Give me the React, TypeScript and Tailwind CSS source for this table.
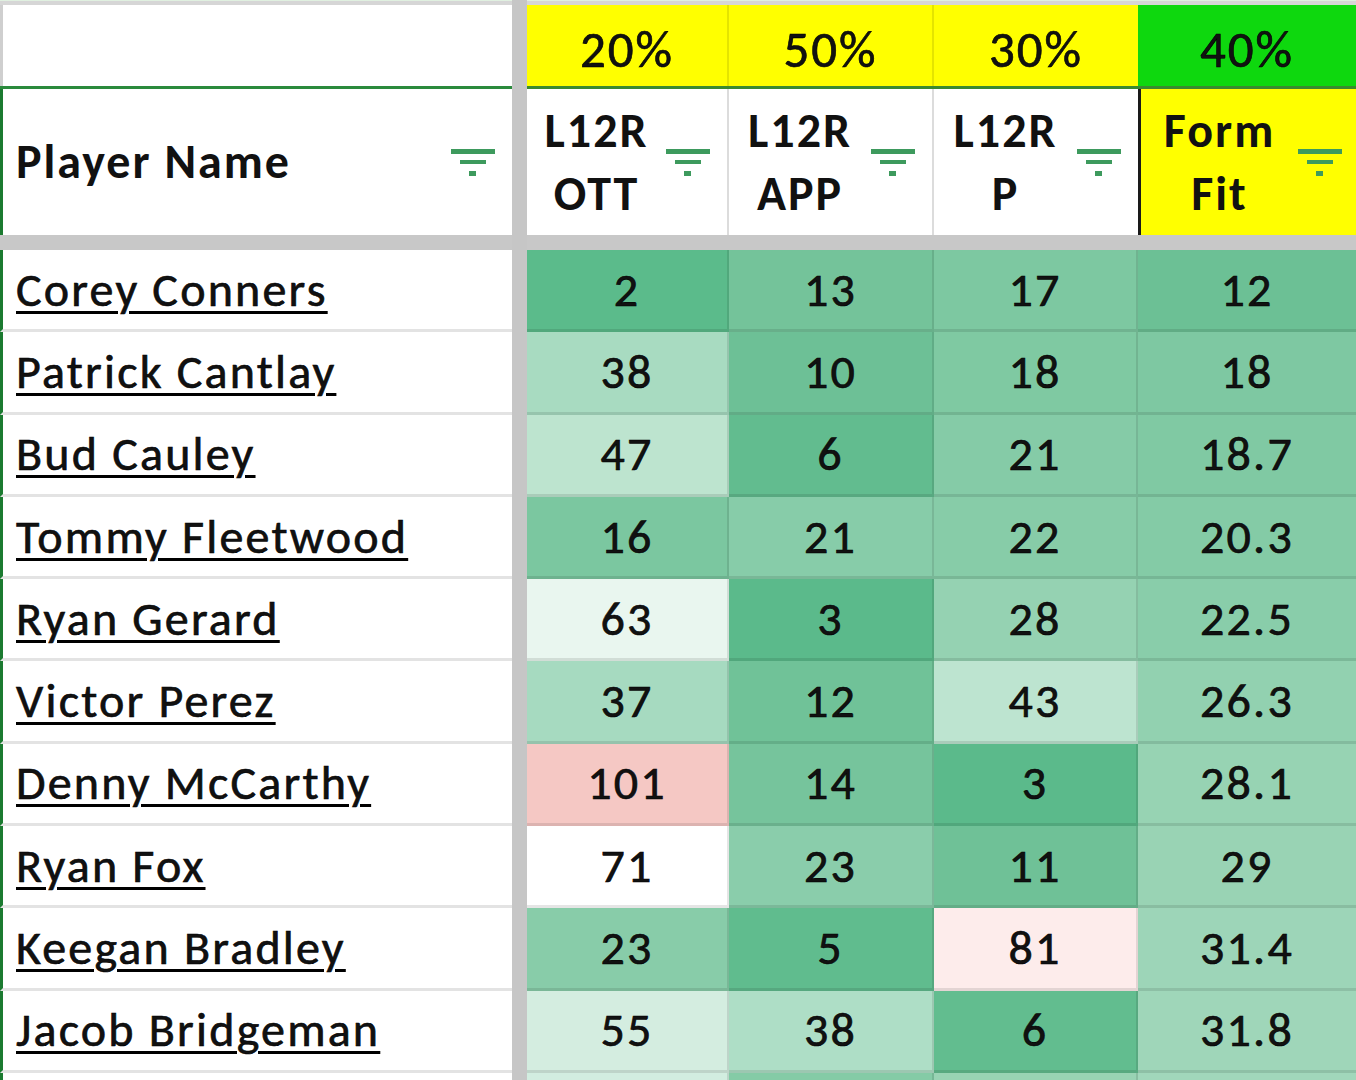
import React from "react";

type Row = { name: string; v: string[]; c: string[] };

const rows: Row[] = [
  { name: "Corey Conners", v: ["2", "13", "17", "12"], c: ["bg-[#5bbb8b]", "bg-[#74c39a]", "bg-[#7dc8a1]", "bg-[#6cc095]"] },
  { name: "Patrick Cantlay", v: ["38", "10", "18", "18"], c: ["bg-[#a8dbc1]", "bg-[#6dc096]", "bg-[#7fc9a2]", "bg-[#7ec8a2]"] },
  { name: "Bud Cauley", v: ["47", "6", "21", "18.7"], c: ["bg-[#bde4cf]", "bg-[#62bc8f]", "bg-[#85cba7]", "bg-[#80c9a3]"] },
  { name: "Tommy Fleetwood", v: ["16", "21", "22", "20.3"], c: ["bg-[#7bc7a0]", "bg-[#87cca9]", "bg-[#87cca8]", "bg-[#84cba6]"] },
  { name: "Ryan Gerard", v: ["63", "3", "28", "22.5"], c: ["bg-[#e9f6ef]", "bg-[#5bba8b]", "bg-[#95d2b2]", "bg-[#89cdaa]"] },
  { name: "Victor Perez", v: ["37", "12", "43", "26.3"], c: ["bg-[#a6dac0]", "bg-[#70c298]", "bg-[#bde4d0]", "bg-[#92d1b0]"] },
  { name: "Denny McCarthy", v: ["101", "14", "3", "28.1"], c: ["bg-[#f5c8c4]", "bg-[#76c49c]", "bg-[#5bba8b]", "bg-[#97d3b3]"] },
  { name: "Ryan Fox", v: ["71", "23", "11", "29"], c: ["bg-[#ffffff]", "bg-[#8acdab]", "bg-[#6fc197]", "bg-[#99d3b4]"] },
  { name: "Keegan Bradley", v: ["23", "5", "81", "31.4"], c: ["bg-[#88cca9]", "bg-[#60bc8e]", "bg-[#fdeceb]", "bg-[#9dd5b8]"] },
  { name: "Jacob Bridgeman", v: ["55", "38", "6", "31.8"], c: ["bg-[#d4ede0]", "bg-[#aedec6]", "bg-[#62bd8f]", "bg-[#9fd6b9]"] },
];

const partial = ["bg-[#d2ede0]", "bg-[#84cba6]", "bg-[#99d3b4]", "bg-[#a1d7bb]"];

function FilterIcon() {
  return (
    <svg width="44" height="27" viewBox="0 0 44 27" className="shrink-0">
      <rect x="0" y="0" width="44" height="5" fill="#3d9a5d" />
      <rect x="9" y="11" width="26" height="4" fill="#3d9a5d" />
      <rect x="18" y="22" width="7" height="5" fill="#3d9a5d" />
    </svg>
  );
}

const font = "font-['Carlito','Lato',sans-serif]";
const heavy = "[-webkit-text-stroke:0.6px_#000]";

export default function App() {
  return (
    <div className={`h-[1080px] w-[1356px] overflow-hidden bg-white text-[#111] ${font}`}>
      <div className="flex">
        {/* Left pane */}
        <div className="flex w-[512px] shrink-0 flex-col">
          <div className="h-[5px] border-t border-[#e0f0e0] bg-[#d6d6d6]" />
          <div className="h-[81px] border-l-[3px] border-[#cfcfcf] bg-white" />
          <div className="h-[3px] bg-[#2a8a3c]" />
          <div className="flex h-[146px] items-center justify-between border-l-[3px] border-[#1b7a30] pl-[13px] pr-[17px]">
            <span className="text-[48px] font-bold leading-none tracking-[2px]">Player Name</span>
            <FilterIcon />
          </div>
          <div className="h-[15px] bg-[#c8c8c8]" />
          {rows.map((r) => (
            <div
              key={r.name}
              className="flex h-[82.3px] shrink-0 items-center border-b-[3px] border-l-[3px] border-b-[#e3e3e3] border-l-[#1b7a30] pl-[13px]"
            >
              <span
                className={`text-[48px] leading-none tracking-[2.2px] underline decoration-[3px] underline-offset-[5px] ${heavy}`}
              >
                {r.name}
              </span>
            </div>
          ))}
          <div className="h-[40px] shrink-0 border-l-[3px] border-l-[#1b7a30]" />
        </div>

        {/* Frozen pane divider */}
        <div className="w-[15px] shrink-0 bg-[#c6c6c6]" />

        {/* Right pane */}
        <div className="flex flex-1 flex-col">
          <div className="h-[5px] border-t border-[#e0f0e0] bg-[#d6d6d6]" />
          <div className={`grid h-[81px] grid-cols-[202px_205px_204px_1fr] text-[51px] leading-none tracking-[2px] ${heavy}`}>
            <div className="flex items-center justify-center border-r-[2px] border-[#e4e400] bg-[#ffff00] pt-[8px]">20%</div>
            <div className="flex items-center justify-center border-r-[2px] border-[#e4e400] bg-[#ffff00] pt-[8px]">50%</div>
            <div className="flex items-center justify-center bg-[#ffff00] pt-[8px]">30%</div>
            <div className="flex items-center justify-center bg-[#0ed80e] pt-[8px]">40%</div>
          </div>
          <div className="h-[3px] bg-[#3b8a2f]" />
          <div className="grid h-[146px] grid-cols-[202px_205px_204px_1fr] text-[48px] font-bold tracking-[2px]">
            {[
              ["L12R", "OTT"],
              ["L12R", "APP"],
              ["L12R", "P"],
            ].map((h, i) => (
              <div
                key={i}
                className={`flex items-center bg-white pr-[17px] ${i < 2 ? "border-r-[2px] border-[#dcdcdc]" : ""}`}
              >
                <div className="flex-1 text-center leading-[63px]">
                  <div>{h[0]}</div>
                  <div>{h[1]}</div>
                </div>
                <FilterIcon />
              </div>
            ))}
            <div className="flex items-center border-l-[3px] border-[#1a1a1a] bg-[#ffff00] pr-[14px]">
              <div className="flex-1 text-center leading-[63px]">
                <div>Form</div>
                <div>Fit</div>
              </div>
              <FilterIcon />
            </div>
          </div>
          <div className="h-[15px] bg-[#c8c8c8]" />
          {rows.map((r) => (
            <div
              key={r.name}
              className={`grid h-[82.3px] shrink-0 grid-cols-[202px_205px_204px_1fr] text-[48px] leading-none tracking-[2.2px] ${heavy}`}
            >
              {r.v.map((val, j) => (
                <div
                  key={j}
                  className={`flex items-center justify-center border-b-[3px] border-black/10 ${j < 3 ? "border-r-[2px]" : ""} ${r.c[j]}`}
                >
                  {val}
                </div>
              ))}
            </div>
          ))}
          <div className="grid h-[40px] shrink-0 grid-cols-[202px_205px_204px_1fr]">
            {partial.map((c, j) => (
              <div key={j} className={`border-black/10 ${j < 3 ? "border-r-[2px]" : ""} ${c}`} />
            ))}
          </div>
        </div>
      </div>
    </div>
  );
}
